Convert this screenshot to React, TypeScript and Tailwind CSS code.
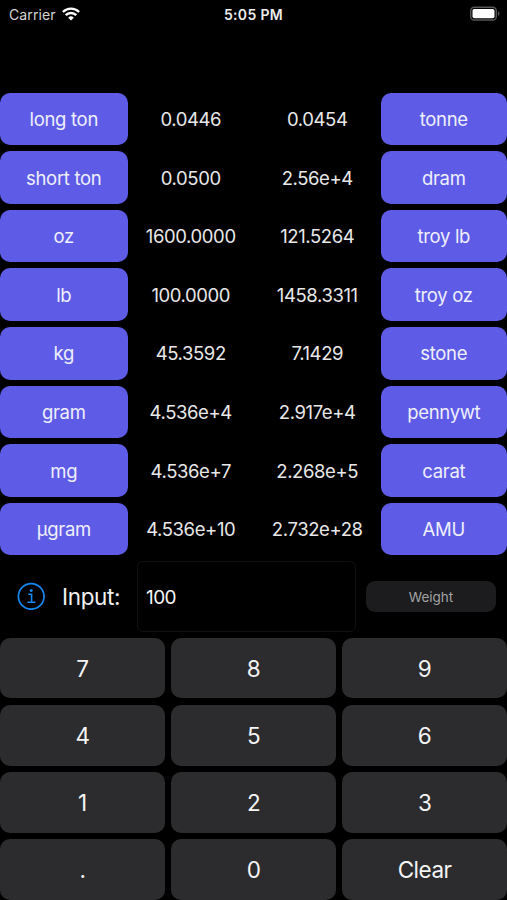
import { useState } from "react";

interface ConversionRow {
	left: string;
	leftValue: string;
	rightValue: string;
	right: string;
}

const rows: ConversionRow[] = [
	{ left: "long ton", leftValue: "0.0446", rightValue: "0.0454", right: "tonne" },
	{ left: "short ton", leftValue: "0.0500", rightValue: "2.56e+4", right: "dram" },
	{ left: "oz", leftValue: "1600.0000", rightValue: "121.5264", right: "troy lb" },
	{ left: "lb", leftValue: "100.0000", rightValue: "1458.3311", right: "troy oz" },
	{ left: "kg", leftValue: "45.3592", rightValue: "7.1429", right: "stone" },
	{ left: "gram", leftValue: "4.536e+4", rightValue: "2.917e+4", right: "pennywt" },
	{ left: "mg", leftValue: "4.536e+7", rightValue: "2.268e+5", right: "carat" },
	{ left: "µgram", leftValue: "4.536e+10", rightValue: "2.732e+28", right: "AMU" },
];

const keys = ["7", "8", "9", "4", "5", "6", "1", "2", "3", ".", "0", "Clear"];

function StatusBar() {
	return (
		<div className="grid h-[27px] grid-cols-[1fr_auto_1fr] items-center pl-[9px] pr-[6px]">
			<div className="flex items-center gap-[6px] text-[14px] tracking-[0.1px] text-[#d4d4d4]">
				<span className="pt-px">Carrier</span>
				<svg viewBox="0 0 18 14" fill="none" stroke="#fff" strokeWidth="2.4" className="h-[14px] w-[18px]">
					<path d="M.9 5a11.5 11.5 0 0 1 16.2 0" />
					<path d="M3.7 8.2a7.5 7.5 0 0 1 10.6 0" />
					<path d="M9 13.4 6.2 10.7a4 4 0 0 1 5.6 0z" fill="#fff" stroke="none" />
				</svg>
			</div>
			<div className="pr-[3px] pt-px text-center text-[14px] font-semibold tracking-[0.35px] text-[#ececec]">5:05 PM</div>
			<svg viewBox="0 0 32 16" className="h-4 w-8 justify-self-end">
				<rect x="1.7" y="1.2" width="25.6" height="12.8" rx="3.6" fill="none" stroke="#575757" strokeWidth="1.4" />
				<rect x="3.5" y="3" width="22" height="9.2" rx="1.8" fill="#fff" />
				<path d="M29 5.2v4.8a2.7 2.7 0 0 0 0-4.8z" fill="#575757" />
			</svg>
		</div>
	);
}

function UnitButton({ label, onClick }: { label: string; onClick: () => void }) {
	return (
		<button
			className="h-full rounded-[10px] bg-[#5e5ce6] pt-[2px] text-center text-[18.5px] tracking-[-0.3px] text-[#efeffc]"
			onClick={onClick}>
			{label}
		</button>
	);
}

export default function App() {
	const [input, setInput] = useState("100");

	const handleKey = (key: string) => {
		setInput((prev) => (key === "Clear" ? "" : prev + key));
	};

	return (
		<div className="flex h-[900px] w-[507px] flex-col overflow-hidden bg-black font-['Inter',sans-serif]">
			<StatusBar />
			<div className="mt-[65.7px] flex flex-col gap-[6.1px]">
				{rows.map((row) => (
					<div
						key={row.left}
						className="grid h-[52.5px] grid-cols-[127.5px_1fr_1fr_126.5px] items-center text-center text-[18.5px] tracking-[-0.4px] text-[#e8e8e8]">
						<UnitButton label={row.left} onClick={() => setInput(row.leftValue)} />
						<span className="pt-[2px]">{row.leftValue}</span>
						<span className="pt-[2px]">{row.rightValue}</span>
						<UnitButton label={row.right} onClick={() => setInput(row.rightValue)} />
					</div>
				))}
			</div>
			<div className="mt-[5.8px] flex h-[70.5px] items-center">
				<button className="ml-[17px]" aria-label="Info">
					<svg viewBox="0 0 28 28" fill="none" stroke="#1688f0" className="size-7">
						<circle cx="14.2" cy="14.4" r="12.8" strokeWidth="1.7" />
						<path d="M11.2 12.2h3.4v7.8M10.4 20.2h8" strokeWidth="1.6" />
						<circle cx="14.2" cy="8.4" r="1.5" fill="#1688f0" stroke="none" />
					</svg>
				</button>
				<span className="ml-[17px] w-[75px] text-[22.5px] tracking-[-0.35px] text-[#f0f0f0]">Input:</span>
				<input
					className="h-full w-[218.5px] rounded-[6px] border border-[#111113] bg-black pl-[8px] pt-[2px] text-[19px] tracking-[-0.6px] text-[#f5f5f5] outline-none"
					value={input}
					onChange={(evt) => setInput(evt.target.value)}
				/>
				<button className="ml-[10.5px] h-[31px] w-[130px] rounded-[9px] bg-[#1c1c1e] pt-px text-[13.5px] text-[#a3a3a5]">
					Weight
				</button>
			</div>
			<div className="mt-[6px] grid grid-cols-3 gap-[6.3px]">
				{keys.map((key) => (
					<button
						key={key}
						className="h-[60.8px] rounded-[10px] bg-[#2c2c2e] pt-px text-[22.5px] tracking-[-0.5px] text-[#f4f4f4]"
						onClick={() => handleKey(key)}>
						{key}
					</button>
				))}
			</div>
		</div>
	);
}
